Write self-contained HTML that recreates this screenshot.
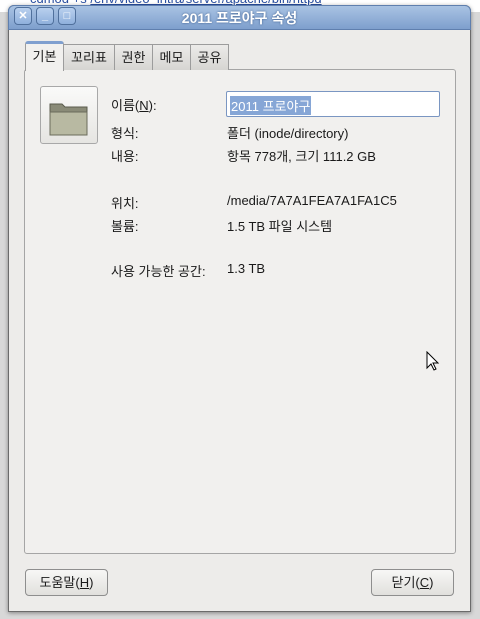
<!DOCTYPE html><html><head><meta charset="utf-8"><style>
body{margin:0;width:480px;height:619px;background:#d8d8d8;position:relative;overflow:hidden;font-family:"Liberation Sans","Noto Sans CJK KR","NanumGothic",sans-serif;font-size:13px;color:#1a1a1a}
.a{position:absolute}
.bgtop{left:0;top:0;width:480px;height:12px;background:#fff;color:#2a4fa0;font-size:13px}
.win{left:8px;top:5px;width:463px;height:607px;background:#edecea;border:1px solid #6b6b6b;border-radius:6px 6px 0 0;box-shadow:0 1px 4px rgba(0,0,0,.4);box-sizing:border-box}
.title{left:8px;top:5px;width:463px;height:25px;background:linear-gradient(#a9c3e3,#7e9fcd);border-radius:6px 6px 0 0;border:1px solid #5f7fae;box-sizing:border-box;color:#fff;text-align:center;line-height:24px;font-size:14px;font-weight:bold;text-shadow:0 0 2px #3a5a8a}
.tb{top:7px;width:18px;height:18px;border:1px solid #50709c;border-radius:4px;background:linear-gradient(#b9d0ee,#8fb0dc);box-sizing:border-box;color:#fff;font-size:11px;text-align:center;line-height:16px;font-weight:bold}
.tab{top:44px;height:26px;border:1px solid #9c9c9c;border-bottom:none;background:linear-gradient(#ecebe9,#d6d5d2);box-sizing:border-box;text-align:center;line-height:26px;font-size:13px}
.panel{left:24px;top:69px;width:432px;height:485px;border:1px solid #a5a5a5;border-radius:3px;background:#f1f0ee;box-sizing:border-box}
.lab{left:111px}.val{left:227px}
.btn{top:569px;width:83px;height:27px;border:1px solid #8e8e8e;border-radius:4px;background:linear-gradient(#f7f7f6,#e1e0dd);box-sizing:border-box;text-align:center;line-height:25px}
</style></head><body>
<div class="a bgtop"><span style="position:absolute;left:30px;top:-9px">cdmod +s <u>/env/video_intra/server/apache/bin/httpd</u></span></div>
<div class="a win"></div>
<div class="a title">2011 프로야구 속성</div>
<div class="a tb" style="left:14px">✕</div>
<div class="a tb" style="left:36px">_</div>
<div class="a tb" style="left:58px">□</div>
<div class="a panel"></div>
<div class="a tab" style="left:25px;width:39px;top:41px;height:30px;background:#f1f0ee;border-top:3px solid #7f9fcf;border-radius:3px 3px 0 0;line-height:26px">기본</div>
<div class="a tab" style="left:63px;width:52px">꼬리표</div>
<div class="a tab" style="left:114px;width:39px">권한</div>
<div class="a tab" style="left:152px;width:39px">메모</div>
<div class="a tab" style="left:190px;width:39px">공유</div>
<div class="a" style="left:40px;top:86px;width:58px;height:58px;border:1px solid #a8a8a8;border-radius:3px;background:linear-gradient(#fafaf9,#e6e5e2);box-sizing:border-box">
<svg width="58" height="58" style="position:absolute;left:-1px;top:-1px"><path d="M10 18h12l3 3h22v28H10z" fill="#8a8b78" stroke="#5a5b4d"/><path d="M10 26h37v23H10z" fill="#b8b9a2" stroke="#6a6b5b"/></svg></div>
<div class="a lab" style="top:95px">이름(<u>N</u>):</div>
<div class="a" style="left:226px;top:91px;width:214px;height:26px;border:1px solid #7a96c2;border-radius:2px;background:#fff;box-sizing:border-box"><span style="position:absolute;left:3px;top:4px;background:#86a6d6;color:#fff;padding:0 1px">2011 프로야구</span></div>
<div class="a lab" style="top:123px">형식:</div><div class="a val" style="top:123px">폴더 (inode/directory)</div>
<div class="a lab" style="top:146px">내용:</div><div class="a val" style="top:146px">항목 778개, 크기 111.2 GB</div>
<div class="a lab" style="top:193px">위치:</div><div class="a val" style="top:193px">/media/7A7A1FEA7A1FA1C5</div>
<div class="a lab" style="top:216px">볼륨:</div><div class="a val" style="top:216px">1.5 TB 파일 시스템</div>
<div class="a lab" style="top:261px">사용 가능한 공간:</div><div class="a val" style="top:261px">1.3 TB</div>
<svg class="a" style="left:426px;top:351px" width="14" height="22"><path d="M1 1v16l4-4 3 6 2-1-3-6h5z" fill="#fff" stroke="#000"/></svg>
<div class="a btn" style="left:25px">도움말(<u>H</u>)</div>
<div class="a btn" style="left:371px">닫기(<u>C</u>)</div>
</body></html>
